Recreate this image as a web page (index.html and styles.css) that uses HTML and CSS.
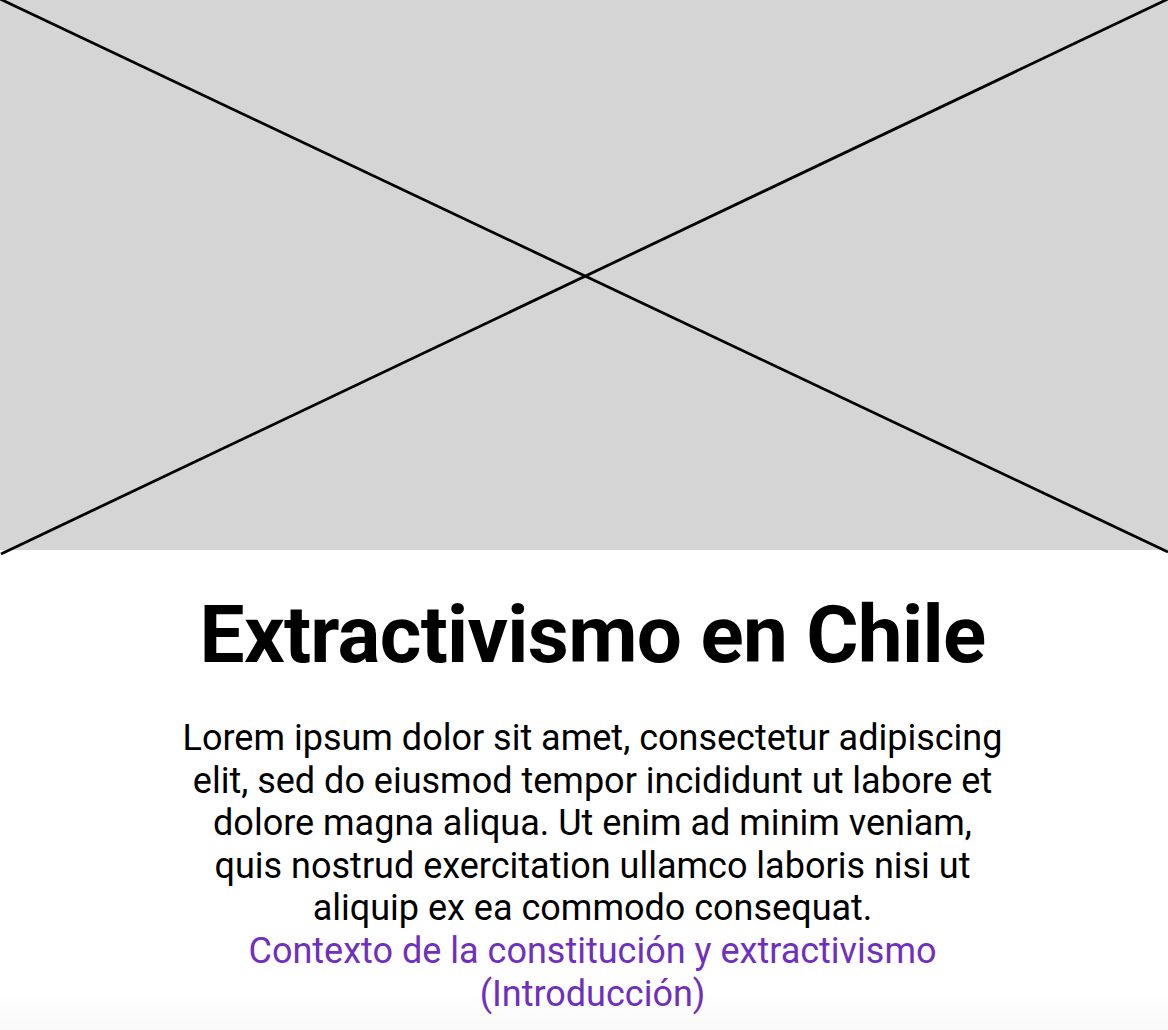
FILE: index.html
```html
<!DOCTYPE html>
<html lang="es">
<head>
<meta charset="utf-8">
<title>Extractivismo en Chile</title>
<link rel="stylesheet" href="styles.css">
</head>
<body>
<div class="hero">
  <svg class="hero-x" viewBox="0 0 1168 550" preserveAspectRatio="none" aria-hidden="true">
    <line x1="0" y1="-1" x2="1168" y2="552" stroke="#000" stroke-width="2.8"/>
    <line x1="1" y1="554" x2="1168" y2="-1" stroke="#000" stroke-width="2.8"/>
  </svg>
</div>
<main class="content">
  <h1 class="title">Extractivismo en Chile</h1>
  <p class="lead">Lorem ipsum dolor sit amet, consectetur adipiscing elit, sed do eiusmod tempor incididunt ut labore et dolore magna aliqua. Ut enim ad minim veniam, quis nostrud exercitation ullamco laboris nisi ut aliquip ex ea commodo consequat.</p>
  <a class="link" href="#">Contexto de la constitución y extractivismo (Introducción)</a>
</main>
</body>
</html>
```
FILE: styles.css
```css
html, body {
  margin: 0;
  padding: 0;
}
body {
  min-height: 1030px;
  font-family: Roboto, "Liberation Sans", sans-serif;
  color: #000;
  background: linear-gradient(to bottom, #ffffff 0, #ffffff 995px, #f9f9f9 1030px);
}
.hero {
  height: 550px;
  background: #d5d5d5;
}
.hero-x {
  display: block;
  width: 100%;
  height: 550px;
  overflow: visible;
}
.content {
  display: flex;
  flex-direction: column;
  align-items: center;
  text-align: center;
  padding-top: 38px;
  padding-left: 17px;
}
.title {
  margin: 0;
  font-size: 80px;
  font-weight: 700;
  line-height: normal;
  letter-spacing: -0.7px;
}
.lead {
  margin: 35px 0 0;
  width: 826px;
  font-size: 36px;
  line-height: 42.6px;
}
.link {
  display: block;
  width: 826px;
  font-size: 36px;
  line-height: 42.6px;
  color: #6f2fbf;
  text-decoration: none;
}
```
